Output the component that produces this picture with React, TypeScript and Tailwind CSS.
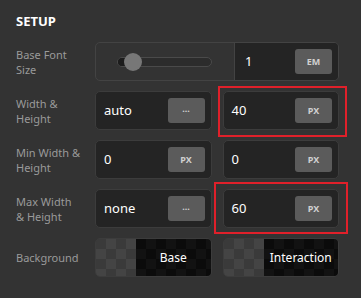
const checker =
  'repeating-conic-gradient(#444 0% 25%, #3a3a3a 0% 50%) 0 0 / 20px 20px'
const darkChecker =
  'repeating-conic-gradient(#121212 0% 25%, #0b0b0b 0% 50%) 0 0 / 20px 20px'

const Unit = ({ label }: { label: string }) => (
  <div className="flex h-[25px] w-[37px] shrink-0 items-center justify-center rounded-[3px] bg-[#5b5b5b] text-[9px] font-bold text-[#d0d0d0]">
    {label}
  </div>
)

const Field = ({ value, unit }: { value: string; unit: string }) => (
  <div className="flex h-[39px] items-center justify-between rounded-[5px] border border-[#3c3c3c] bg-[#242424] pl-2 pr-[6px]">
    <span className="text-[13px] text-white">{value}</span>
    <Unit label={unit} />
  </div>
)

const Label = ({ children }: { children: React.ReactNode }) => (
  <div className="text-[11px] leading-[15px] text-[#9a9a9a]">{children}</div>
)

const Swatch = ({ label }: { label: string }) => (
  <div className="flex h-[39px] overflow-hidden rounded-[5px] border border-[#3c3c3c]">
    <div className="w-[40px] shrink-0" style={{ background: checker }} />
    <div
      className="flex flex-1 items-center justify-center text-[12px] text-white"
      style={{ background: darkChecker }}
    >
      {label}
    </div>
  </div>
)

export default function App() {
  return (
    <div
      className="relative h-[298px] w-[361px] bg-[#333333] pl-4 pr-[22px] pt-[13px]"
      style={{ fontFamily: '"Noto Sans", sans-serif' }}
    >
      <h2 className="text-[13px] font-bold leading-[16px] text-white">SETUP</h2>

      <div className="mt-[13px] grid grid-cols-[68px_1fr_1fr] gap-x-[11px] gap-y-[10px]">
        <div className="flex items-center">
          <Label>
            Base Font
            <br />
            Size
          </Label>
        </div>
        <div className="col-span-2 flex h-[39px] overflow-hidden rounded-[5px] border border-[#434343]">
          <div className="flex w-[139px] items-center border-r border-[#434343] pl-[21px]">
            <div className="relative h-[10px] w-[95px] rounded-full border border-[#4a4a4a] bg-[#2c2c2c]">
              <div className="absolute left-0 top-0 h-full w-[14px] rounded-l-full bg-[#1c1c1c]" />
              <div className="absolute left-[6px] top-[-5px] h-[18px] w-[18px] rounded-full bg-[#777777]" />
            </div>
          </div>
          <div className="flex flex-1 items-center justify-between bg-[#242424] pl-[10px] pr-[6px]">
            <span className="text-[13px] text-white">1</span>
            <Unit label="EM" />
          </div>
        </div>

        <div className="flex items-center">
          <Label>
            Width &amp;
            <br />
            Height
          </Label>
        </div>
        <Field value="auto" unit="···" />
        <Field value="40" unit="PX" />

        <div className="flex items-center">
          <Label>
            Min Width &amp;
            <br />
            Height
          </Label>
        </div>
        <Field value="0" unit="PX" />
        <Field value="0" unit="PX" />

        <div className="flex items-center">
          <Label>
            Max Width
            <br />
            &amp; Height
          </Label>
        </div>
        <Field value="none" unit="···" />
        <Field value="60" unit="PX" />

        <div className="flex items-center">
          <Label>Background</Label>
        </div>
        <Swatch label="Base" />
        <Swatch label="Interaction" />
      </div>

      <div className="absolute left-[218px] top-[86px] h-[51px] w-[129px] border-2 border-[#e0202a]" />
      <div className="absolute left-[214px] top-[182px] h-[52px] w-[134px] border-2 border-[#e0202a]" />
    </div>
  )
}
